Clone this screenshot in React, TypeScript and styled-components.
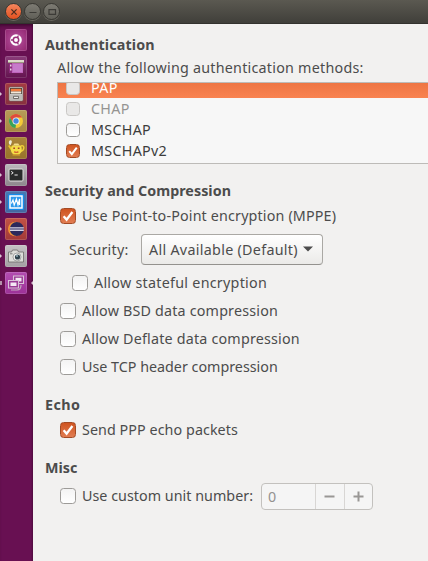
import React from "react";
import styled, { createGlobalStyle, css } from "styled-components";

const Global = createGlobalStyle`
  * { box-sizing: border-box; }
  body { margin: 0; background: #f2f1f0; overflow: hidden; }
`;

const Screen = styled.div`
  width: 428px;
  height: 561px;
  display: flex;
  flex-direction: column;
  overflow: hidden;
  background: #f2f1f0;
  color: #4c4c4c;
  font-family: "Noto Sans", "Open Sans", sans-serif;
  font-size: 14.3px;
`;

const TitleBar = styled.header`
  height: 24px;
  flex: none;
  display: flex;
  align-items: flex-start;
  padding: 3px 0 0 5px;
  gap: 2px;
  background: linear-gradient(#5b5951, #403f3a);
  border-bottom: 1px solid #33322e;
`;

const WindowButton = styled.span<{ $close?: boolean }>`
  width: 17px;
  height: 17px;
  padding: 0.5px;
  border-radius: 50%;
  border: 1px solid #393833;
  background: ${(p) => (p.$close ? "linear-gradient(#f5865d, #e2501f)" : "linear-gradient(#7d7b73, #605f58)")};
  box-shadow: 0 1px 0 #69675f;
  svg { display: block; width: 14px; height: 14px; }
`;

const Body = styled.div`
  display: flex;
  flex: 1;
  min-height: 0;
`;

const Launcher = styled.nav`
  width: 33px;
  flex: none;
  display: flex;
  flex-direction: column;
  gap: 5px;
  padding-top: 5px;
  background: linear-gradient(90deg, #681052 0 31px, #540d43 33px);
  box-shadow: inset 0 4px 4px -3px #300524;
`;

const LauncherItem = styled.div`
  height: 22px;
  display: flex;
  align-items: center;
`;

const Pip = styled.span<{ $kind?: "dot" | "square" | "end" }>`
  width: ${(p) => (p.$kind === "end" ? 2 : 5)}px;
  height: 4px;
  flex: none;
  margin-left: ${(p) => (p.$kind === "end" ? 4 : 0)}px;
  ${(p) => p.$kind === "dot" && css`background: linear-gradient(90deg, #d9c6d4 0 2px, transparent 2px); clip-path: polygon(0 0, 2px 50%, 0 100%);`}
  ${(p) => p.$kind === "square" && css`background: linear-gradient(90deg, #b391aa 0 2px, transparent 2px);`}
  ${(p) => p.$kind === "end" && css`background: #d9c6d4; clip-path: polygon(100% 0, 0 50%, 100% 100%);`}
`;

const Tile = styled.span<{ $bg: string }>`
  width: 22px;
  height: 22px;
  flex: none;
  border-radius: 2px;
  background: ${(p) => p.$bg};
  box-shadow: inset 0 0 0 1px rgba(255, 255, 255, 0.14);
  svg { display: block; width: 22px; height: 22px; }
`;

const Panel = styled.main`
  flex: 1;
  min-width: 0;
  display: flex;
  flex-direction: column;
  padding: 10px 0 0 12px;
`;

const Text = styled.span<{ $ls?: number }>`
  white-space: nowrap;
  letter-spacing: ${(p) => p.$ls ?? 0}px;
`;

const Heading = styled.h2<{ $top?: number; $ls?: number }>`
  margin: ${(p) => p.$top ?? 0}px 0 0;
  height: 22px;
  flex: none;
  font-size: 14.3px;
  font-weight: 700;
  line-height: 22px;
  white-space: nowrap;
  letter-spacing: ${(p) => p.$ls ?? 0}px;
`;

const Caption = styled.div`
  height: 26px;
  flex: none;
  padding-left: 12px;
  line-height: 24px;
`;

const MethodList = styled.div`
  height: 82px;
  flex: none;
  margin-left: 12px;
  display: flex;
  flex-direction: column;
  justify-content: flex-end;
  overflow: hidden;
  padding-bottom: 2px;
  border: 1px solid #bdbbb8;
  border-right: 0;
  background: #f7f7f7;
`;

const MethodRow = styled.div<{ $selected?: boolean; $muted?: boolean }>`
  height: 21px;
  flex: none;
  display: flex;
  align-items: center;
  gap: 11px;
  padding-left: 8px;
  color: ${(p) => (p.$selected ? "#fff" : p.$muted ? "#959492" : "#3c3c3c")};
  background: ${(p) => (p.$selected ? "linear-gradient(#ed7442 5px, #f98351)" : "none")};
`;

const OptionRow = styled.label<{ $h?: number; $indent?: number }>`
  height: ${(p) => p.$h ?? 28}px;
  flex: none;
  display: flex;
  align-items: center;
  gap: 6px;
  padding-left: ${(p) => p.$indent ?? 15}px;
  ${Text} { line-height: 20px; padding-bottom: 1px; }
`;

const Box = styled.span<{ $on?: boolean; $small?: boolean; $muted?: boolean }>`
  width: ${(p) => (p.$small ? 14 : 16)}px;
  height: ${(p) => (p.$small ? 14 : 16)}px;
  flex: none;
  border-radius: 3.5px;
  border: 1px solid ${(p) => (p.$on ? "#a34a24" : p.$muted ? "#c9c7c5" : "#9d9b98")};
  background: ${(p) => (p.$on ? "linear-gradient(#cf5420, #e27d52)" : p.$muted ? "#e9e8e7" : "linear-gradient(#f3f3f3, #fff)")};
  svg { display: block; width: 100%; height: 100%; }
`;

const SecurityRow = styled.div`
  height: 39px;
  flex: none;
  display: flex;
  align-items: center;
  padding-left: 24px;
`;

const SecurityLabel = styled.span`
  width: 72px;
`;

const Combo = styled.div`
  width: 182px;
  height: 31px;
  display: flex;
  align-items: center;
  justify-content: space-between;
  padding: 0 9px 1px 7px;
  border: 1px solid #aaa8a4;
  border-bottom-color: #94928e;
  border-radius: 4px;
  background: linear-gradient(#fff, #ebeae8);
  svg { width: 10px; height: 6px; }
`;

const Spin = styled.div`
  width: 112px;
  height: 27px;
  margin-left: auto;
  margin-right: 55px;
  display: flex;
  border: 1px solid #c3c1be;
  border-radius: 4px;
  background: #f5f5f5;
  color: #949290;
`;

const SpinValue = styled.span`
  width: 53px;
  padding-left: 6px;
  line-height: 25px;
`;

const SpinButton = styled.span`
  flex: 1;
  display: flex;
  align-items: center;
  justify-content: center;
  border-left: 1px solid #d8d6d4;
  svg { width: 11px; height: 11px; }
`;

const Check = ({ on, small, muted }: { on?: boolean; small?: boolean; muted?: boolean }) => (
  <Box $on={on} $small={small} $muted={muted}>
    {on && (
      <svg viewBox="0 0 14 14">
        <path d="M2.6 7.2 5.6 10.6 11.4 3" fill="none" stroke="#fff" strokeWidth="2.3" />
      </svg>
    )}
  </Box>
);

const icons: { bg: string; pip?: "dot" | "square"; end?: boolean; art: React.ReactNode }[] = [
  {
    bg: "radial-gradient(#b6529e, #90256f)",
    art: (
      <g>
        <circle cx="11" cy="11" r="5.8" fill="#fff" />
        <circle cx="11" cy="11" r="2.7" fill="none" stroke="#9b317c" strokeWidth="1.5" />
        <path d="M8.5 11H6M12.2 8.7l1.3-2.2M12.2 13.3l1.3 2.2" stroke="#9b317c" strokeWidth="1.3" />
      </g>
    ),
  },
  {
    bg: "linear-gradient(#8a3c79, #64134f)",
    art: (
      <g>
        <path d="M4 7h14v10H4z" fill="#bf63bb" />
        <path d="M4 7h3v10H4z" fill="#8c2c7d" />
        <path d="M5 8.5h1.5v2H5zm0 4h1.5v2H5z" fill="#e8d2e6" />
        <path d="M8 8h9.5v8H8z" fill="#c77bcb" />
        <path d="M3 4h16v3H3z" fill="#dedccb" />
        <path d="M3 6.6h16" stroke="#777458" strokeWidth=".7" />
      </g>
    ),
  },
  {
    bg: "linear-gradient(#a53b42, #87303f)",
    art: (
      <g>
        <rect x="4" y="4" width="14" height="14" rx="1" fill="#d8d6d2" stroke="#6e625c" strokeWidth=".7" />
        <path d="M5 5h12v6H5z" fill="#4b443e" />
        <path d="M5.8 5.8h10.4v2.7H5.8z" fill="#f07b3d" />
        <path d="M5.8 8.5h10.4v2H5.8z" fill="#f3e8d8" />
        <path d="M5 11.4h12v6H5z" fill="#bdbbb7" />
        <path d="M8.5 13.3h5v2.2h-5z" fill="#efefed" stroke="#68635e" strokeWidth=".9" />
      </g>
    ),
  },
  {
    bg: "linear-gradient(#b79b58, #a88742)",
    art: (
      <g>
        <circle cx="11" cy="11" r="7" fill="#f4ca37" />
        <path d="M4.94 7.5A7 7 0 0 1 17.06 7.5H11L8 12.8z" fill="#de4b3c" />
        <path d="M4.94 7.5 8 12.8 11 14.5 10.5 18A7 7 0 0 1 4.94 7.5z" fill="#38a35b" />
        <circle cx="11" cy="11" r="3.5" fill="#f3f2ee" />
        <circle cx="11" cy="11" r="2.7" fill="#4588dd" />
      </g>
    ),
  },
  {
    bg: "linear-gradient(#aa853a, #98732a)",
    art: (
      <g>
        <path d="M16 9c3.8-1.6 4 4.6-.6 5.5" fill="none" stroke="#f1cf36" strokeWidth="1.4" />
        <path d="M6.5 12.5 3.8 8.6" stroke="#edc62c" strokeWidth="1.8" />
        <path d="M7 8.5h8.6c2.2 3.4 1 7.6-1.6 9H8.6C6 16 4.8 12 7 8.5z" fill="#f5dd46" />
        <path d="M8 8.5 9.4 6.4h3.8l1.4 2.1z" fill="#f2dc8a" />
        <path d="M8.3 11.2h1.7m2.8 0h1.7" stroke="#a8452c" strokeWidth="1.4" />
        <path d="M9.2 14.6q2.1 1.6 4.2 0" fill="none" stroke="#d4682f" strokeWidth="1.4" />
        <path d="M5 3.2c2.8-.5 2 2.6.5 5-2-1-2.2-4.2-.5-5z" fill="#efebd9" />
        <path d="M7.5 18h7.6" stroke="#d69a2b" strokeWidth="1.2" />
      </g>
    ),
  },
  {
    bg: "linear-gradient(#bcb8bc, #8d868c)",
    art: (
      <g>
        <rect x="4" y="5" width="14" height="12" rx="1" fill="#292b2b" stroke="#e1dfdf" />
        <path d="m6.2 7.4 2 1.4-2 1.4M9.5 11h3.2" fill="none" stroke="#f0f0f0" strokeWidth="1" />
      </g>
    ),
  },
  {
    bg: "linear-gradient(#4779b2, #4567a0)",
    art: (
      <g>
        <rect x="3" y="3" width="16" height="16" rx="1.5" fill="#168bea" />
        <path d="M5 5h12v12H5z" fill="#2f9aec" stroke="#fff" strokeWidth="1.5" />
        <path d="M6.4 12.5 8 9l1.2 5 2.2-6L13 14l1.6-6v6" fill="none" stroke="#fff" strokeWidth="1.2" />
      </g>
    ),
  },
  {
    bg: "linear-gradient(#c25245, #a23938)",
    art: (
      <g>
        <circle cx="10.3" cy="11" r="7.3" fill="#f19436" />
        <circle cx="11.8" cy="11" r="7" fill="#2c295c" />
        <path d="M5 9.9h13.8M5 12.3h13.8" stroke="#d5d4e5" strokeWidth="1.4" />
      </g>
    ),
  },
  {
    bg: "linear-gradient(#c6c2c5, #a49fa3)",
    art: (
      <g>
        <path d="M3.5 7h3l1-2h5l1 2h5v10h-15z" fill="#ddddd9" stroke="#6c6a68" strokeWidth=".8" />
        <circle cx="12" cy="12" r="4" fill="#f0f0ee" stroke="#777" strokeWidth=".6" />
        <circle cx="12.5" cy="12" r="2.6" fill="#30424b" />
        <circle cx="12" cy="11" r=".9" fill="#9cbac4" />
        <path d="M5 8.8h2.5" stroke="#777" />
      </g>
    ),
  },
  {
    bg: "linear-gradient(#b34db1, #9c3197)",
    pip: "square",
    end: true,
    art: (
      <g>
        <path d="M8.5 4h10v7.5h-10z" fill="#9a3b95" stroke="#d9c3d8" strokeWidth="1.1" />
        <path d="M10.5 5.8h6v3.6h-6z" fill="#f4e9f4" />
        <path d="M3.5 8.5h10V16h-10z" fill="#9a3b95" stroke="#d9c3d8" strokeWidth="1.1" />
        <path d="M5.5 10.5h6V14h-6z" fill="#f4e9f4" />
        <path d="M6 18h6M12 18c3 0 4-2 4-5" stroke="#c3a9bd" strokeWidth="1.2" fill="none" />
      </g>
    ),
  },
];

const methods = [
  { name: "PAP", selected: true, muted: true, on: false, ls: 0.4 },
  { name: "CHAP", selected: false, muted: true, on: false, ls: 0.3 },
  { name: "MSCHAP", selected: false, muted: false, on: false, ls: 0.3 },
  { name: "MSCHAPv2", selected: false, muted: false, on: true, ls: 0.3 },
];

export default function App() {
  return (
    <Screen>
      <Global />
      <TitleBar>
        <WindowButton $close>
          <svg viewBox="0 0 14 14"><path d="m4.4 4.4 5.2 5.2m0-5.2-5.2 5.2" stroke="#4c2d20" strokeWidth="1.3" /></svg>
        </WindowButton>
        <WindowButton>
          <svg viewBox="0 0 14 14"><path d="M3.5 7.5h7" stroke="#3c3b37" strokeWidth="1" /></svg>
        </WindowButton>
        <WindowButton>
          <svg viewBox="0 0 14 14"><path d="M4 4.7h6.5v4.6H4z" fill="none" stroke="#3c3b37" strokeWidth="1.2" /></svg>
        </WindowButton>
      </TitleBar>
      <Body>
        <Launcher>
          {icons.map((icon, i) => (
            <LauncherItem key={i}>
              <Pip $kind={icon.pip ?? (i > 1 ? "dot" : undefined)} />
              <Tile $bg={icon.bg}><svg viewBox="0 0 22 22">{icon.art}</svg></Tile>
              {icon.end && <Pip $kind="end" />}
            </LauncherItem>
          ))}
        </Launcher>
        <Panel>
          <Heading $ls={0.15}>Authentication</Heading>
          <Caption><Text $ls={0.24}>Allow the following authentication methods:</Text></Caption>
          <MethodList>
            {methods.map((m) => (
              <MethodRow key={m.name} $selected={m.selected} $muted={m.muted}>
                <Check small on={m.on} muted={m.muted} />
                <Text $ls={m.ls}>{m.name}</Text>
              </MethodRow>
            ))}
          </MethodList>
          <Heading $top={16} $ls={0.04}>Security and Compression</Heading>
          <OptionRow><Check on /><Text $ls={0.16}>Use Point-to-Point encryption (MPPE)</Text></OptionRow>
          <SecurityRow>
            <SecurityLabel><Text $ls={0.22}>Security:</Text></SecurityLabel>
            <Combo>
              <Text $ls={0.3}>All Available (Default)</Text>
              <svg viewBox="0 0 10 6"><path d="M0 .5h10L5 5.5z" fill="#4c4c4c" /></svg>
            </Combo>
          </SecurityRow>
          <OptionRow $indent={27}><Check /><Text $ls={0.27}>Allow stateful encryption</Text></OptionRow>
          <OptionRow><Check /><Text $ls={0.19}>Allow BSD data compression</Text></OptionRow>
          <OptionRow><Check /><Text $ls={0.2}>Allow Deflate data compression</Text></OptionRow>
          <OptionRow><Check /><Text>Use TCP header compression</Text></OptionRow>
          <Heading $top={13} $ls={0.4}>Echo</Heading>
          <OptionRow><Check on /><Text $ls={0.07}>Send PPP echo packets</Text></OptionRow>
          <Heading $top={13}>Misc</Heading>
          <OptionRow $h={34}>
            <Check /><Text $ls={0.03}>Use custom unit number:</Text>
            <Spin>
              <SpinValue>0</SpinValue>
              <SpinButton><svg viewBox="0 0 11 11"><path d="M.5 5.5h10" stroke="#999795" strokeWidth="2" /></svg></SpinButton>
              <SpinButton><svg viewBox="0 0 11 11"><path d="M.5 5.5h10M5.5.5v10" stroke="#999795" strokeWidth="2" /></svg></SpinButton>
            </Spin>
          </OptionRow>
        </Panel>
      </Body>
    </Screen>
  );
}
